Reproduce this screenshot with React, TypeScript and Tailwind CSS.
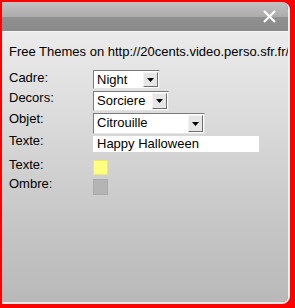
import React from "react";

function Select({ value, width }: { value: string; width: string }) {
  return (
    <div
      className={`flex h-full items-stretch border border-t-[#7a7a7a] border-l-[#7a7a7a] border-b-[#e4e4e4] border-r-[#e4e4e4] bg-white ${width}`}
    >
      <div className="flex-1 overflow-hidden whitespace-nowrap pl-[3px] text-[13px] leading-[17px] text-black">
        {value}
      </div>
      <div className="my-[1px] mr-[1px] flex w-[15px] items-center justify-center border border-t-[#f4f4f4] border-l-[#f4f4f4] border-b-[#6e6e6e] border-r-[#6e6e6e] bg-[#e6e6e6]">
        <svg width="7" height="4" viewBox="0 0 7 4">
          <polygon points="0,0 7,0 3.5,4" fill="#000" />
        </svg>
      </div>
    </div>
  );
}

export default function App() {
  return (
    <div
      className="h-[308px] w-[295px] bg-[#ff0000] pb-[4px] pl-[2px] pr-[5px] pt-[2px]"
      style={{ fontFamily: '"Liberation Sans", Arial, sans-serif' }}
    >
      <div className="flex h-full flex-col overflow-hidden rounded-br-[8px] rounded-tr-[8px] border-r-[2px] border-b-[2px] border-r-[#f2f2f2] border-b-[#e6e6e6]">
        <div className="flex h-[29px] shrink-0 items-center justify-end bg-[linear-gradient(to_bottom,#c2c2c2_0%,#acacac_50%,#909090_52%,#8a8a8a_100%)] pr-[12px]">
          <svg width="13" height="13" viewBox="0 0 13 13">
            <path d="M1 1 L12 12 M12 1 L1 12" stroke="#fff" strokeWidth="2.2" />
          </svg>
        </div>
        <div className="h-[1px] shrink-0 bg-[#f4f4f4]" />
        <div className="flex flex-1 flex-col bg-[linear-gradient(to_bottom,#ebebeb_0%,#dcdcdc_30%,#c4c4c4_75%,#b9b9b9_100%)] pl-[7px] pt-[12px] text-[13px] leading-[15px] text-black">
          <div className="h-[15px] whitespace-nowrap">Free Themes on http://20cents.video.perso.sfr.fr/</div>
          <div className="mt-[11px] flex h-[19px] items-start">
            <div className="w-[84px]">Cadre:</div>
            <Select value="Night" width="w-[67px]" />
          </div>
          <div className="mt-[2px] flex h-[20px] items-start">
            <div className="mt-[-1px] w-[84px]">Decors:</div>
            <Select value="Sorciere" width="w-[76px]" />
          </div>
          <div className="mt-[2px] flex h-[21px] items-start">
            <div className="mt-[-2px] w-[84px]">Objet:</div>
            <Select value="Citrouille" width="w-[112px]" />
          </div>
          <div className="mt-[2px] flex h-[16px] items-start">
            <div className="mt-[-3px] w-[84px]">Texte:</div>
            <div className="h-[16px] w-[166px] bg-white pl-[4px] text-[13px] leading-[16px]">Happy Halloween</div>
          </div>
          <div className="mt-[8px] flex h-[15px] items-start">
            <div className="mt-[-3px] w-[84px]">Texte:</div>
            <div className="h-[15px] w-[15px] border border-[#e8e86a] bg-[#ffff80]" />
          </div>
          <div className="mt-[4px] flex h-[16px] items-start">
            <div className="mt-[-3px] w-[84px]">Ombre:</div>
            <div className="h-[16px] w-[15px] border border-[#aaaaaa] bg-[#b4b4b4]" />
          </div>
        </div>
      </div>
    </div>
  );
}
